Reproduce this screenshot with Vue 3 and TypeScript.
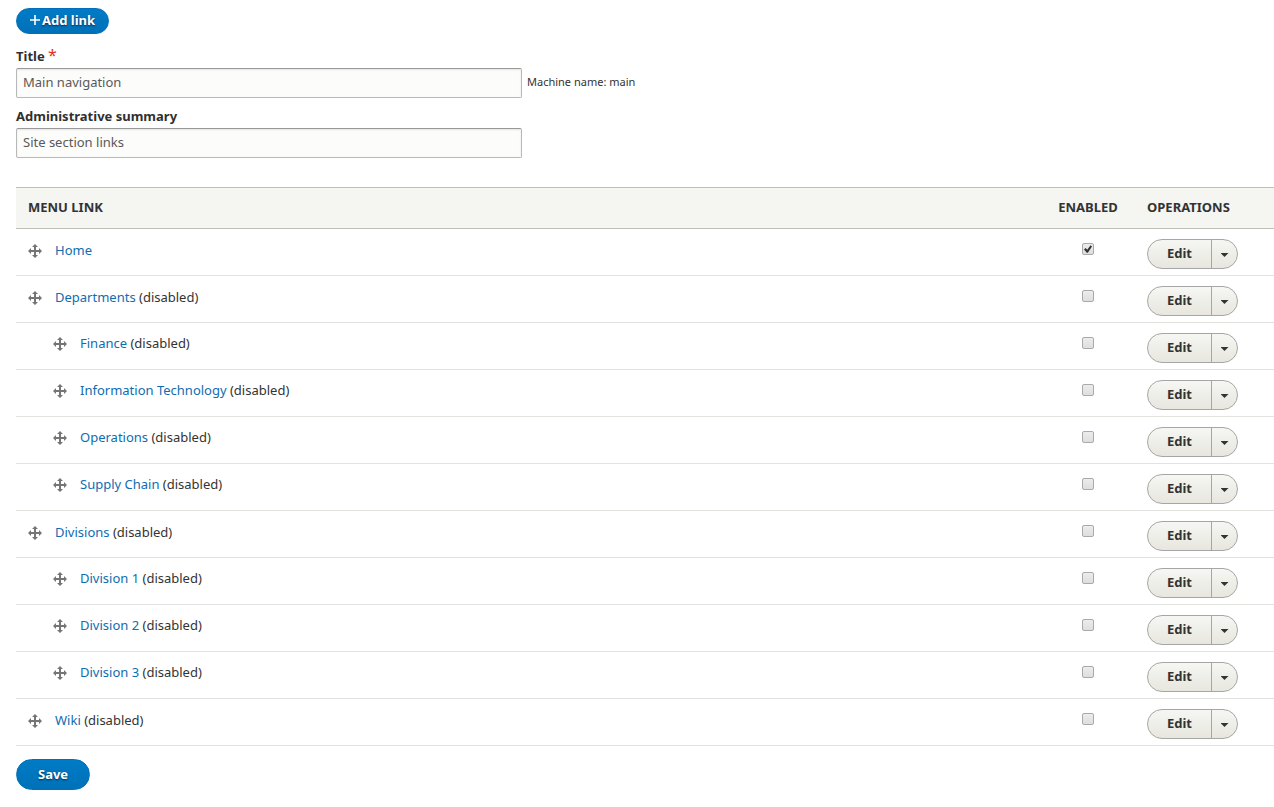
<script setup lang="ts">
import { ref } from 'vue'

interface MenuLink {
  id: number
  title: string
  depth: number
  enabled: boolean
}

const title = ref('Main navigation')
const summary = ref('Site section links')

const links = ref<MenuLink[]>([
  { id: 1, title: 'Home', depth: 0, enabled: true },
  { id: 2, title: 'Departments', depth: 0, enabled: false },
  { id: 3, title: 'Finance', depth: 1, enabled: false },
  { id: 4, title: 'Information Technology', depth: 1, enabled: false },
  { id: 5, title: 'Operations', depth: 1, enabled: false },
  { id: 6, title: 'Supply Chain', depth: 1, enabled: false },
  { id: 7, title: 'Divisions', depth: 0, enabled: false },
  { id: 8, title: 'Division 1', depth: 1, enabled: false },
  { id: 9, title: 'Division 2', depth: 1, enabled: false },
  { id: 10, title: 'Division 3', depth: 1, enabled: false },
  { id: 11, title: 'Wiki', depth: 0, enabled: false },
])
</script>

<template>
  <form class="page" @submit.prevent>
    <a class="primary add" href="#">
      <svg class="plus" viewBox="0 0 10 10" aria-hidden="true"><path d="M4.2 0h1.6v4.2H10v1.6H5.8V10H4.200V5.800H0V4.200h4.200z" /></svg>
      <span>Add link</span>
    </a>

    <div class="field">
      <label for="title">Title <span class="required">*</span></label>
      <div class="control">
        <input id="title" v-model="title" class="text" type="text" required />
        <span class="machine">Machine name: main</span>
      </div>
    </div>

    <div class="field">
      <label for="summary">Administrative summary</label>
      <div class="control">
        <input id="summary" v-model="summary" class="text" type="text" />
      </div>
    </div>

    <table class="links">
      <thead>
        <tr>
          <th scope="col">Menu link</th>
          <th scope="col" class="enabled">Enabled</th>
          <th scope="col" class="operations">Operations</th>
        </tr>
      </thead>
      <tbody>
        <tr v-for="link in links" :key="link.id">
          <td>
            <div class="item" :class="{ child: link.depth > 0 }">
              <svg class="move" viewBox="0 0 14 14" aria-hidden="true">
                <path d="M7 0l3 3H8v3h3V4l3 3-3 3V8H8v3h2l-3 3-3-3h2V8H3v2L0 7l3-3v2h3V3H4z" />
              </svg>
              <span class="name"><a :id="`link-${link.id}`" href="#">{{ link.title }}</a><template v-if="!link.enabled"> (disabled)</template></span>
            </div>
          </td>
          <td class="enabled">
            <input v-model="link.enabled" class="check" type="checkbox" :aria-labelledby="`link-${link.id}`" />
          </td>
          <td class="operations">
            <div class="dropbutton">
              <button type="button" class="edit">Edit</button>
              <button type="button" class="toggle" aria-label="List additional actions"><span class="arrow"></span></button>
            </div>
          </td>
        </tr>
      </tbody>
    </table>

    <button type="submit" class="primary save">Save</button>
  </form>
</template>

<style>
body {
  background: #fff;
}
</style>

<style scoped>
.page {
  padding: 8px 0 16px 16px;
  color: #333;
  font-family: "Lucida Grande", "Lucida Sans Unicode", "Noto Sans", "Open Sans", sans-serif;
  font-size: 13px;
  line-height: 20px;
}

.page,
.page * {
  box-sizing: border-box;
}

a {
  color: #0f6cb0;
  text-decoration: none;
}

.primary {
  display: flex;
  align-items: center;
  justify-content: center;
  width: max-content;
  border: 1px solid #0071b8;
  border-radius: 20px;
  background: linear-gradient(#007bc6, #0071b8);
  color: #fff;
  font-family: inherit;
  font-size: 13px;
  font-weight: 700;
  line-height: 20px;
  text-shadow: 0 1px 2px rgba(0, 0, 0, 0.6);
}

.add {
  gap: 2px;
  height: 26px;
  margin-bottom: 12px;
  padding: 0 13px 2px;
}

.plus {
  width: 10px;
  height: 10px;
  fill: #fff;
}

.save {
  height: 31px;
  margin-top: 13px;
  padding: 0 21px 2px;
}

.field {
  margin-bottom: 8px;
}

label {
  display: block;
  height: 22px;
  color: #2f2f2f;
  font-weight: 700;
}

.required {
  color: #e0301e;
  font-size: 16px;
  font-weight: 400;
  line-height: 16px;
}

.control {
  display: flex;
  align-items: center;
  gap: 5px;
}

.text {
  width: 506px;
  height: 30px;
  padding: 0 6px 2px;
  border: 1px solid #b8b8b8;
  border-top-color: #999;
  border-radius: 2px;
  background: #fcfcfa;
  box-shadow: inset 0 1px 2px rgba(0, 0, 0, 0.1);
  color: #595959;
  font-family: inherit;
  font-size: 13px;
}

.machine {
  padding-bottom: 2px;
  font-size: 11px;
}

.links {
  width: 100%;
  margin-top: 29px;
  border-collapse: separate;
  border-spacing: 0;
}

th {
  height: 42px;
  padding: 0 12px 2px;
  border-top: 1px solid #bebfb9;
  border-bottom: 1px solid #bebfb9;
  background: #f5f5f2;
  text-align: left;
  text-transform: uppercase;
}

td {
  height: 47px;
  padding: 10px 12px 6px;
  border-bottom: 1px solid #e2e2df;
  vertical-align: top;
}

.enabled {
  width: 94px;
  text-align: center;
}

.operations {
  width: 139px;
}

.item {
  display: flex;
  align-items: center;
  gap: 13px;
  height: 24px;
}

.child {
  height: 22px;
  padding-left: 25px;
}

.name {
  padding-bottom: 2px;
}

.move {
  width: 14px;
  height: 14px;
  fill: #757575;
}

.check {
  position: relative;
  display: block;
  width: 12px;
  height: 12px;
  margin: 4px auto 0;
  appearance: none;
  border: 1px solid #aaa;
  border-radius: 2px;
  background: linear-gradient(#ececec, #dedede);
}

.check:checked::before {
  position: absolute;
  inset: 1px;
  background: #333;
  clip-path: polygon(0 55%, 20% 38%, 40% 60%, 82% 3%, 100% 20%, 48% 98%, 35% 98%);
  content: "";
}

.dropbutton {
  display: flex;
  width: 91px;
  height: 30px;
  overflow: hidden;
  border: 1px solid #a6a6a6;
  border-radius: 15px;
  background: linear-gradient(#f6f6f3, #e7e7df);
}

.dropbutton button {
  padding: 0 0 2px;
  border: 0;
  background: none;
  color: #333;
  font-family: inherit;
  font-size: 13px;
  font-weight: 700;
}

.edit {
  flex: 1;
}

.dropbutton .toggle {
  display: flex;
  align-items: center;
  justify-content: center;
  width: 26px;
  padding: 0;
  border-left: 1px solid #a6a6a6;
}

.arrow {
  width: 8px;
  height: 4px;
  margin-top: 2px;
  background: #333;
  clip-path: polygon(0 0, 100% 0, 50% 100%);
}
</style>
